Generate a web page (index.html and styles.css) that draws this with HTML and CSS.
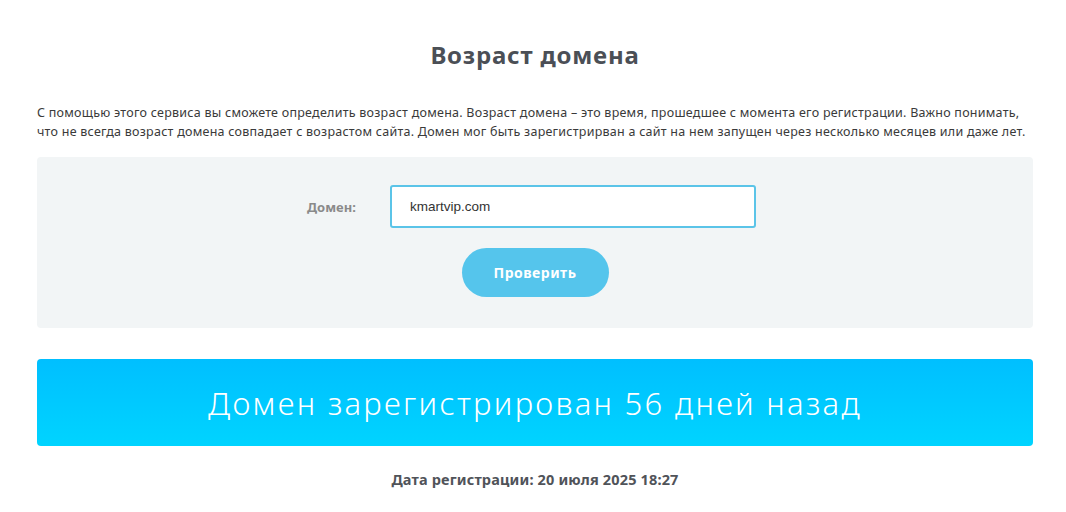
FILE: index.html
```html
<!DOCTYPE html>
<html lang="ru">
<head>
    <meta charset="UTF-8">
    <title>Возраст домена</title>
    <link rel="stylesheet" href="styles.css">
</head>
<body>
    <div id="container">
        <h1 class="title">Возраст домена</h1>
        <p class="intro">С помощью этого сервиса вы сможете определить возраст домена. Возраст домена – это время, прошедшее с момента его регистрации. Важно понимать, что не всегда возраст домена совпадает с возрастом сайта. Домен мог быть зарегистрирван а сайт на нем запущен через несколько месяцев или даже лет.</p>
        <form class="check-box">
            <div class="row">
                <label class="label" for="domain">Домен:</label>
                <input class="field" id="domain" type="text" value="kmartvip.com">
            </div>
            <button class="btn" type="button">Проверить</button>
        </form>
        <div class="result">Домен зарегистрирован 56 дней назад</div>
        <p class="reg-date">Дата регистрации: 20 июля 2025 18:27</p>
    </div>
</body>
</html>
```

FILE: styles.css
```css
*{
    margin: 0;
    padding: 0;
    box-sizing: border-box;
}
body{
    background: #fff;
    font-family: "Noto Sans", "DejaVu Sans", sans-serif;
    color: #333;
}
#container{
    width: 996px;
    margin-left: 37px;
    padding-top: 40px;
}
.title{
    text-align: center;
    font-size: 24px;
    font-weight: 700;
    letter-spacing: 0.8px;
    color: #4b4f56;
    line-height: 30px;
}
.intro{
    margin-top: 33px;
    font-size: 12.5px;
    letter-spacing: 0.25px;
    line-height: 19px;
    color: #3a3a3a;
}
.check-box{
    margin-top: 16px;
    background: #f2f5f6;
    border-radius: 4px;
    height: 171px;
    padding-top: 28px;
    display: flex;
    flex-direction: column;
    align-items: center;
}
.row{
    display: flex;
    align-items: center;
    margin-right: 7px;
}
.label{
    width: 83px;
    font-size: 13px;
    font-weight: 700;
    color: #8a8a8a;
}
.field{
    width: 366px;
    height: 43px;
    border: 2px solid #5bc4e8;
    border-radius: 3px;
    padding: 0 18px;
    font-family: "Liberation Sans", Arial, sans-serif;
    font-size: 13.5px;
    color: #333;
    outline: none;
}
.btn{
    margin-top: 20px;
    width: 147px;
    height: 49px;
    border: none;
    border-radius: 25px;
    background: #55c5ec;
    color: #fff;
    font-family: "Noto Sans", sans-serif;
    font-size: 14px;
    font-weight: 700;
    letter-spacing: 0.5px;
    cursor: pointer;
}
.result{
    margin-top: 31px;
    height: 87px;
    border-radius: 4px;
    background: linear-gradient(#00bfff, #00d4ff);
    color: #fff;
    font-size: 31px;
    font-weight: 300;
    letter-spacing: 2.3px;
    display: flex;
    align-items: center;
    justify-content: center;
}
.reg-date{
    margin-top: 23px;
    text-align: center;
    font-size: 14.5px;
    font-weight: 700;
    letter-spacing: 0.15px;
    color: #505359;
}
```
